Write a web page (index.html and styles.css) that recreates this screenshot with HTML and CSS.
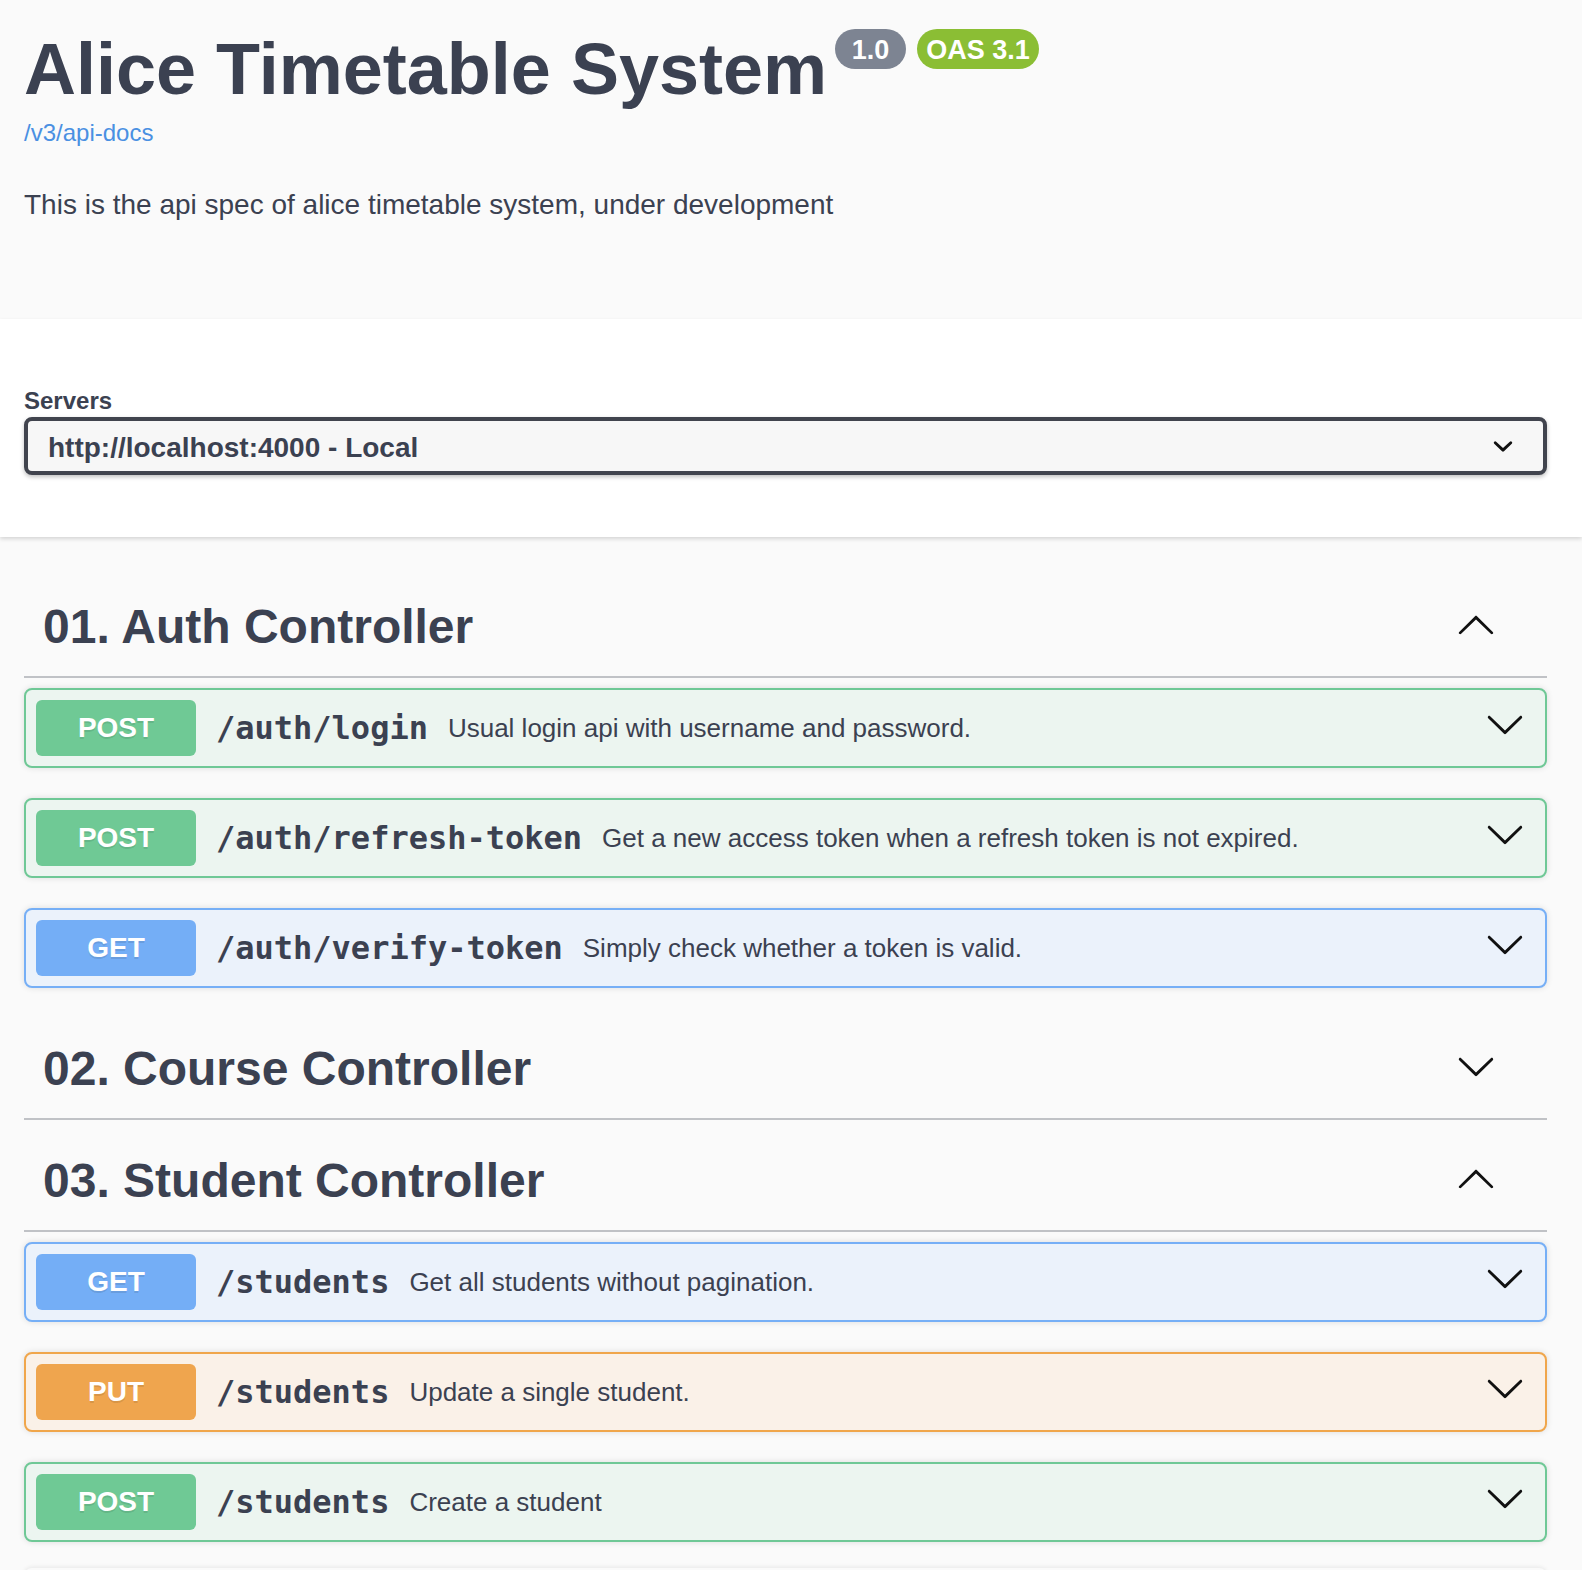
FILE: index.html
```html
<!DOCTYPE html>
<html lang="en">
<head>
<meta charset="utf-8">
<title>Alice Timetable System</title>
<link rel="stylesheet" href="styles.css">
</head>
<body>
<svg class="defs" width="0" height="0" aria-hidden="true">
  <symbol viewBox="0 0 20 20" id="arrow-up"><path d="M17.418 14.908c.272.268.709.268.979 0s.271-.701 0-.969l-7.908-7.830c-.27-.268-.707-.268-.979 0l-7.908 7.830c-.27.268-.27.701 0 .969.271.268.709.268.979 0L10 7.723l7.418 7.185z"/></symbol>
  <symbol viewBox="0 0 20 20" id="arrow-down"><path d="M17.418 6.109c.272-.268.709-.268.979 0s.271.701 0 .969l-7.908 7.830c-.27.268-.707.268-.979 0l-7.908-7.830c-.27-.268-.27-.701 0-.969.271-.268.709-.268.979 0L10 13.250l7.418-7.141z"/></symbol>
</svg>

<div class="info">
  <div class="title-row">
    <h2 class="title">Alice Timetable System</h2>
    <span class="badge badge-version">1.0</span>
    <span class="badge badge-oas">OAS 3.1</span>
  </div>
  <a class="link" href="#">/v3/api-docs</a>
  <p class="description">This is the api spec of alice timetable system, under development</p>
</div>

<div class="scheme">
  <div class="servers-title">Servers</div>
  <div class="select">
    <span class="select-text">http://localhost:4000 - Local</span>
    <svg class="select-arrow" viewBox="0 0 20 20" width="40" height="40"><path d="M13.418 7.859a.695.695 0 01.978 0 .68.68 0 010 .969l-3.908 3.83a.697.697 0 01-.979 0l-3.908-3.83a.68.68 0 010-.969.695.695 0 01.978 0L10 11l3.418-3.141z"/></svg>
  </div>
</div>

<div class="ops">
  <section class="tag-section">
    <div class="tag">
      <h3 class="tag-name">01. Auth Controller</h3>
      <button class="tag-toggle"><svg width="40" height="40"><use href="#arrow-up"/></svg></button>
    </div>
    <div class="opblock post">
      <span class="method">POST</span>
      <span class="path">/auth/login</span>
      <span class="summary">Usual login api with username and password.</span>
      <svg class="control" width="40" height="40"><use href="#arrow-down"/></svg>
    </div>
    <div class="opblock post">
      <span class="method">POST</span>
      <span class="path">/auth/refresh-token</span>
      <span class="summary">Get a new access token when a refresh token is not expired.</span>
      <svg class="control" width="40" height="40"><use href="#arrow-down"/></svg>
    </div>
    <div class="opblock get">
      <span class="method">GET</span>
      <span class="path">/auth/verify-token</span>
      <span class="summary">Simply check whether a token is valid.</span>
      <svg class="control" width="40" height="40"><use href="#arrow-down"/></svg>
    </div>
  </section>

  <section class="tag-section">
    <div class="tag">
      <h3 class="tag-name">02. Course Controller</h3>
      <button class="tag-toggle"><svg width="40" height="40"><use href="#arrow-down"/></svg></button>
    </div>
  </section>

  <section class="tag-section">
    <div class="tag">
      <h3 class="tag-name">03. Student Controller</h3>
      <button class="tag-toggle"><svg width="40" height="40"><use href="#arrow-up"/></svg></button>
    </div>
    <div class="opblock get">
      <span class="method">GET</span>
      <span class="path">/students</span>
      <span class="summary">Get all students without pagination.</span>
      <svg class="control" width="40" height="40"><use href="#arrow-down"/></svg>
    </div>
    <div class="opblock put">
      <span class="method">PUT</span>
      <span class="path">/students</span>
      <span class="summary">Update a single student.</span>
      <svg class="control" width="40" height="40"><use href="#arrow-down"/></svg>
    </div>
    <div class="opblock post">
      <span class="method">POST</span>
      <span class="path">/students</span>
      <span class="summary">Create a student</span>
      <svg class="control" width="40" height="40"><use href="#arrow-down"/></svg>
    </div>
  </section>
</div>
<div class="models"></div>
</body>
</html>
```

FILE: styles.css
```css
html {
  overflow: hidden;
}

body {
  margin: 0;
  background: #fafafa;
  color: #3b4151;
  font-family: "Liberation Sans", Arial, sans-serif;
}

.defs {
  position: absolute;
  width: 0;
  height: 0;
  overflow: hidden;
}

/* ---------- info ---------- */
.info {
  padding: 29px 35px 98px 24px;
}

.title-row {
  display: flex;
  align-items: flex-start;
  height: 80px;
}

.title {
  margin: 0;
  font-size: 72px;
  line-height: 80px;
  font-weight: 700;
  color: #3b4151;
}

.badge {
  display: block;
  height: 40px;
  line-height: 42px;
  border-radius: 40px;
  color: #fff;
  font-size: 27px;
  font-weight: 700;
  text-align: center;
}

.badge-version {
  width: 71px;
  margin-left: 8px;
  background: #7d8492;
}

.badge-oas {
  width: 122px;
  margin-left: 11px;
  background: #8bbe34;
}

.link {
  display: block;
  margin-top: 10px;
  font-size: 24px;
  line-height: 28px;
  color: #4a90e2;
  text-decoration: none;
}

.description {
  margin: 42px 0 0;
  font-size: 28px;
  line-height: 32px;
  color: #3b4151;
}

/* ---------- servers ---------- */
.scheme {
  background: #fff;
  padding: 68px 35px 62px 24px;
  box-shadow: 0 2px 4px 0 rgba(0, 0, 0, 0.15);
  position: relative;
}

.servers-title {
  font-size: 24px;
  line-height: 28px;
  font-weight: 700;
  margin-bottom: 2px;
}

.select {
  box-sizing: border-box;
  height: 58px;
  display: flex;
  align-items: center;
  padding: 4px 20px 0;
  border: 4px solid #41444e;
  border-radius: 8px;
  background: #f7f7f7;
  box-shadow: 0 2px 4px 0 rgba(0, 0, 0, 0.25);
  font-size: 28px;
  font-weight: 700;
  color: #3b4151;
}

.select-text {
  flex: 1 1 auto;
}

.select-arrow {
  flex: none;
  fill: #111;
  margin-bottom: 4px;
}

/* ---------- operations ---------- */
.ops {
  padding: 39px 35px 0 24px;
}

.tag {
  display: flex;
  align-items: center;
  padding: 20px 40px 20px 19px;
  border-bottom: 2px solid rgba(59, 65, 81, 0.3);
  margin-bottom: 10px;
}

.tag-name {
  flex: 1 1 auto;
  margin: 0;
  font-size: 48px;
  line-height: 55px;
  font-weight: 700;
  color: #3b4151;
}

.tag-toggle {
  height: 60px;
  display: flex;
  align-items: center;
  padding: 0 11px 0 12px;
  border: 0;
  background: none;
}

.tag-toggle svg {
  fill: #111;
  margin-bottom: 5px;
}

.opblock {
  display: flex;
  align-items: center;
  padding: 10px;
  margin-bottom: 30px;
  border: 2px solid #000;
  border-radius: 8px;
  box-shadow: 0 0 6px rgba(0, 0, 0, 0.12);
}

.method {
  flex: none;
  min-width: 160px;
  padding: 12px 0;
  font-size: 28px;
  line-height: 32px;
  font-weight: 700;
  text-align: center;
  color: #fff;
  border-radius: 6px;
  text-shadow: 0 2px 0 rgba(0, 0, 0, 0.1);
}

.path {
  flex: none;
  padding: 0 20px;
  font-family: "DejaVu Sans Mono", "Liberation Mono", monospace;
  font-size: 32px;
  font-weight: 700;
  color: #3b4151;
}

.summary {
  flex: 1 1 auto;
  font-size: 26px;
  color: #3b4151;
}

.control {
  flex: none;
  fill: #111;
  margin-right: 10px;
  margin-bottom: 9px;
}

.post {
  border-color: #6fc896;
  background: #ecf5f0;
}

.post .method {
  background: #6fc995;
}

.get {
  border-color: #76aff6;
  background: #ebf2fb;
}

.get .method {
  background: #74aef6;
}

.put {
  border-color: #f0a64b;
  background: #faf1e8;
}

.put .method {
  background: #efa54e;
}

.models {
  margin: -4px 35px 0 24px;
  height: 30px;
  border-radius: 8px;
  box-shadow: 0 -1px 4px rgba(0, 0, 0, 0.08);
}
```
